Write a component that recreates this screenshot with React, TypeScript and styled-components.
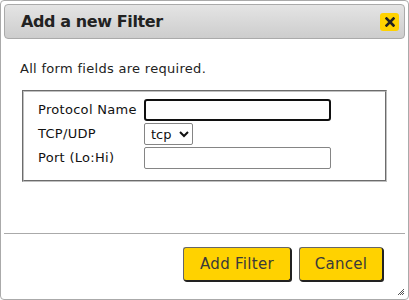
import React from 'react';
import styled, { createGlobalStyle } from 'styled-components';

const GlobalStyle = createGlobalStyle`
  html, body {
    margin: 0;
    padding: 0;
    background: #ffffff;
  }
  body {
    font-family: 'DejaVu Sans', Verdana, sans-serif;
    color: #222222;
  }
`;

const Dialog = styled.div`
  box-sizing: border-box;
  width: 409px;
  height: 300px;
  border: 1px solid #aaaaaa;
  border-radius: 4px;
  padding: 3px;
  display: flex;
  flex-direction: column;
  background: #ffffff;
  position: relative;
`;

const TitleBar = styled.div`
  box-sizing: border-box;
  height: 35px;
  flex-shrink: 0;
  border: 1px solid #aaaaaa;
  border-radius: 4px;
  background: linear-gradient(#e4e4e4, #cdcdcd);
  display: flex;
  align-items: center;
  justify-content: space-between;
  padding: 0 5px 0 16px;
`;

const Title = styled.span`
  font-size: 16px;
  font-weight: bold;
  letter-spacing: -0.4px;
  color: #222222;
`;

const CloseButton = styled.button`
  width: 19px;
  height: 18px;
  padding: 0;
  border: none;
  border-radius: 3px;
  background: #ffd200;
  display: flex;
  align-items: center;
  justify-content: center;
  cursor: pointer;
`;

const Content = styled.div`
  flex: 1;
  padding: 22px 18px 0 16px;
`;

const Notice = styled.p`
  margin: 0 0 13px 0;
  font-size: 13px;
  line-height: 16px;
  letter-spacing: 0.3px;
`;

const FieldBox = styled.fieldset`
  box-sizing: border-box;
  margin: 0 0 0 2px;
  width: 365px;
  height: 92px;
  border: 2px groove #c0c0c0;
  padding: 7px 0 0 14px;
`;

const FieldGrid = styled.div`
  display: grid;
  grid-template-columns: 106px 187px;
  row-gap: 2px;
  align-items: center;
`;

const Label = styled.label`
  font-size: 13px;
  line-height: 16px;
  letter-spacing: 0.3px;
  color: #111111;
`;

const TextInput = styled.input`
  box-sizing: border-box;
  width: 187px;
  height: 22px;
  margin: 0;
  border: 1px solid #858585;
  border-radius: 2px;
  font-family: 'DejaVu Sans', Verdana, sans-serif;
  font-size: 13px;
  padding: 1px 3px;
  &:focus {
    outline: none;
    border: 2px solid #101010;
    border-radius: 3px;
  }
`;

const Select = styled.select`
  box-sizing: border-box;
  width: 49px;
  height: 22px;
  margin: 0;
  font-family: 'DejaVu Sans', Verdana, sans-serif;
  font-size: 13px;
  color: #111111;
  border: 1px solid #858585;
  border-radius: 2px;
  background: #ffffff;
  padding: 0 0 0 2px;
`;

const ButtonPane = styled.div`
  box-sizing: border-box;
  flex-shrink: 0;
  border-top: 1px solid #aaaaaa;
  height: 63px;
  display: flex;
  justify-content: flex-end;
  align-items: flex-start;
  gap: 8px;
  padding: 13px 22px 0 0;
`;

const DialogButton = styled.button<{ $w: number }>`
  box-sizing: border-box;
  width: ${({ $w }) => $w}px;
  height: 34px;
  background: #ffd200;
  border: 1px solid #666666;
  border-right-color: #222222;
  border-bottom-color: #222222;
  box-shadow: 1px 1px 0 #222222;
  border-radius: 3px;
  font-family: 'DejaVu Sans', Verdana, sans-serif;
  font-size: 15px;
  letter-spacing: 0.3px;
  color: #3a3a3a;
  padding: 0;
  cursor: pointer;
`;

const Grip = styled.svg`
  position: absolute;
  right: 3px;
  bottom: 3px;
`;

export default function App() {
  return (
    <>
      <GlobalStyle />
      <Dialog>
        <TitleBar>
          <Title>Add a new Filter</Title>
          <CloseButton aria-label="close">
            <svg width="10" height="10" viewBox="0 0 10 10">
              <path d="M1.5 1.5 L8.5 8.5 M8.5 1.5 L1.5 8.5" stroke="#222" strokeWidth="2.6" strokeLinecap="square" />
            </svg>
          </CloseButton>
        </TitleBar>
        <Content>
          <Notice>All form fields are required.</Notice>
          <FieldBox>
            <FieldGrid>
              <Label>Protocol Name</Label>
              <TextInput autoFocus />
              <Label>TCP/UDP</Label>
              <div>
                <Select defaultValue="tcp">
                  <option value="tcp">tcp</option>
                  <option value="udp">udp</option>
                </Select>
              </div>
              <Label>Port (Lo:Hi)</Label>
              <TextInput />
            </FieldGrid>
          </FieldBox>
        </Content>
        <ButtonPane>
          <DialogButton $w={108}>Add Filter</DialogButton>
          <DialogButton $w={84}>Cancel</DialogButton>
        </ButtonPane>
        <Grip width="8" height="8" viewBox="0 0 8 8">
          <path d="M7 1 L1 7 M7 3 L3 7 M7 5 L5 7" stroke="#555" strokeWidth="1" />
        </Grip>
      </Dialog>
    </>
  );
}
